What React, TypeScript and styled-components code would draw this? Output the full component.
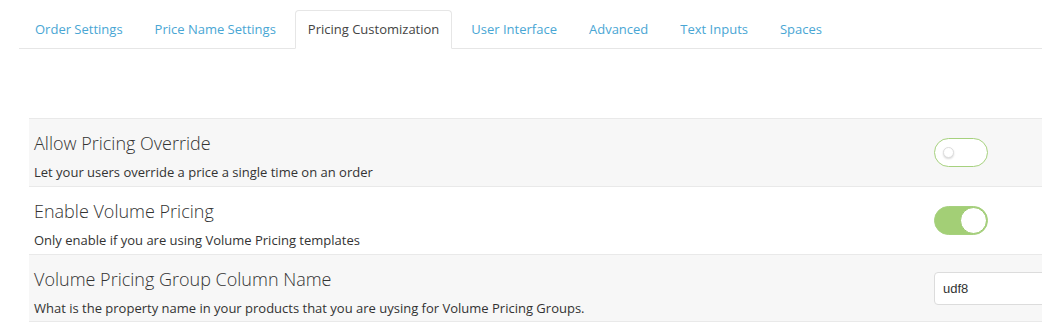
import { createGlobalStyle, styled } from 'styled-components'

type Setting = {
  title: string
  description: string
  kind: 'toggle' | 'text'
  on?: boolean
  value?: string
}

const tabs = [
  'Order Settings',
  'Price Name Settings',
  'Pricing Customization',
  'User Interface',
  'Advanced',
  'Text Inputs',
  'Spaces',
]

const settings: Setting[] = [
  {
    title: 'Allow Pricing Override',
    description: 'Let your users override a price a single time on an order',
    kind: 'toggle',
    on: false,
  },
  {
    title: 'Enable Volume Pricing',
    description: 'Only enable if you are using Volume Pricing templates',
    kind: 'toggle',
    on: true,
  },
  {
    title: 'Volume Pricing Group Column Name',
    description: 'What is the property name in your products that you are uysing for Volume Pricing Groups.',
    kind: 'text',
    value: 'udf8',
  },
]

const App = () => {
  return (
    <>
      <GlobalStyle />
      <StyledPage>
        <StyledTabBar>
          {tabs.map((tab) => (
            <StyledTab key={tab} $active={tab === 'Pricing Customization'}>
              {tab}
            </StyledTab>
          ))}
        </StyledTabBar>
        <StyledList>
          {settings.map((s, i) => (
            <StyledRow key={s.title} $shaded={i % 2 === 0}>
              <StyledText>
                <StyledTitle>{s.title}</StyledTitle>
                <StyledDescription>{s.description}</StyledDescription>
              </StyledText>
              <StyledControl>
                {s.kind === 'toggle' ? (
                  <StyledSwitch $on={!!s.on}>
                    <StyledKnob $on={!!s.on} />
                  </StyledSwitch>
                ) : (
                  <StyledInput defaultValue={s.value} />
                )}
              </StyledControl>
            </StyledRow>
          ))}
        </StyledList>
      </StyledPage>
    </>
  )
}

const GlobalStyle = createGlobalStyle`
  html, body {
    margin: 0;
    padding: 0;
    background: #fff;
    overflow: hidden;
  }
  body {
    font-family: 'Open Sans', 'Noto Sans', sans-serif;
    color: #333;
  }
`

const StyledPage = styled.div`
  width: 1042px;
  padding-top: 10px;
`

const StyledTabBar = styled.div`
  display: flex;
  align-items: flex-end;
  gap: 6px;
  margin-left: 19px;
  padding-left: 3px;
  border-bottom: 1px solid #e6e6e6;
  height: 38px;
`

const StyledTab = styled.div<{ $active: boolean }>`
  height: 39px;
  box-sizing: border-box;
  display: flex;
  align-items: center;
  padding: 0 12px 2px;
  margin-bottom: -1px;
  font-size: 13px;
  white-space: nowrap;
  border: 1px solid ${({ $active }) => ($active ? '#e6e6e6' : 'transparent')};
  border-bottom-color: ${({ $active }) => ($active ? '#fff' : 'transparent')};
  border-radius: 4px 4px 0 0;
  background: ${({ $active }) => ($active ? '#fff' : 'transparent')};
  color: ${({ $active }) => ($active ? '#444' : '#49a6d4')};
`

const StyledList = styled.div`
  margin-top: 69px;
  margin-left: 29px;
`

const StyledRow = styled.div<{ $shaded: boolean }>`
  display: grid;
  grid-template-columns: 1fr 108px;
  align-items: center;
  height: 68px;
  box-sizing: border-box;
  border-top: 1px solid #e9e9e9;
  background: ${({ $shaded }) => ($shaded ? '#f7f7f7' : '#fff')};
  &:last-child {
    border-bottom: 1px solid #e9e9e9;
  }
`

const StyledText = styled.div`
  padding: 6px 0 0 5px;
  align-self: start;
`

const StyledTitle = styled.div`
  font-size: 18px;
  font-weight: 300;
  line-height: 26px;
  color: #333;
  padding-top: 5px;
`

const StyledDescription = styled.div`
  font-size: 13px;
  line-height: 20px;
  margin-top: 6px;
  color: #333;
`

const StyledControl = styled.div`
  display: flex;
  align-items: center;
`

const StyledSwitch = styled.div<{ $on: boolean }>`
  width: 54px;
  height: 29px;
  box-sizing: border-box;
  border-radius: 15px;
  border: 1px solid #a6d17e;
  background: ${({ $on }) => ($on ? '#a3cf76' : '#fff')};
  display: flex;
  align-items: center;
  justify-content: ${({ $on }) => ($on ? 'flex-end' : 'flex-start')};
  padding: ${({ $on }) => ($on ? '0' : '0 0 0 8px')};
`

const StyledKnob = styled.div<{ $on: boolean }>`
  width: ${({ $on }) => ($on ? '27px' : '11px')};
  height: ${({ $on }) => ($on ? '27px' : '11px')};
  border-radius: 50%;
  background: #fff;
  box-sizing: border-box;
  border: 1px solid ${({ $on }) => ($on ? '#9cc96f' : '#ddd')};
  box-shadow: ${({ $on }) => ($on ? 'none' : '0 1px 2px rgba(0,0,0,0.15)')};
`

const StyledInput = styled.input`
  width: 140px;
  height: 33px;
  box-sizing: border-box;
  border: 1px solid #dcdcdc;
  border-radius: 4px;
  padding: 0 8px;
  font-family: 'Liberation Sans', Arial, sans-serif;
  font-size: 13px;
  color: #333;
  background: #fff;
  outline: none;
  margin-top: 1px;
`

export default App
